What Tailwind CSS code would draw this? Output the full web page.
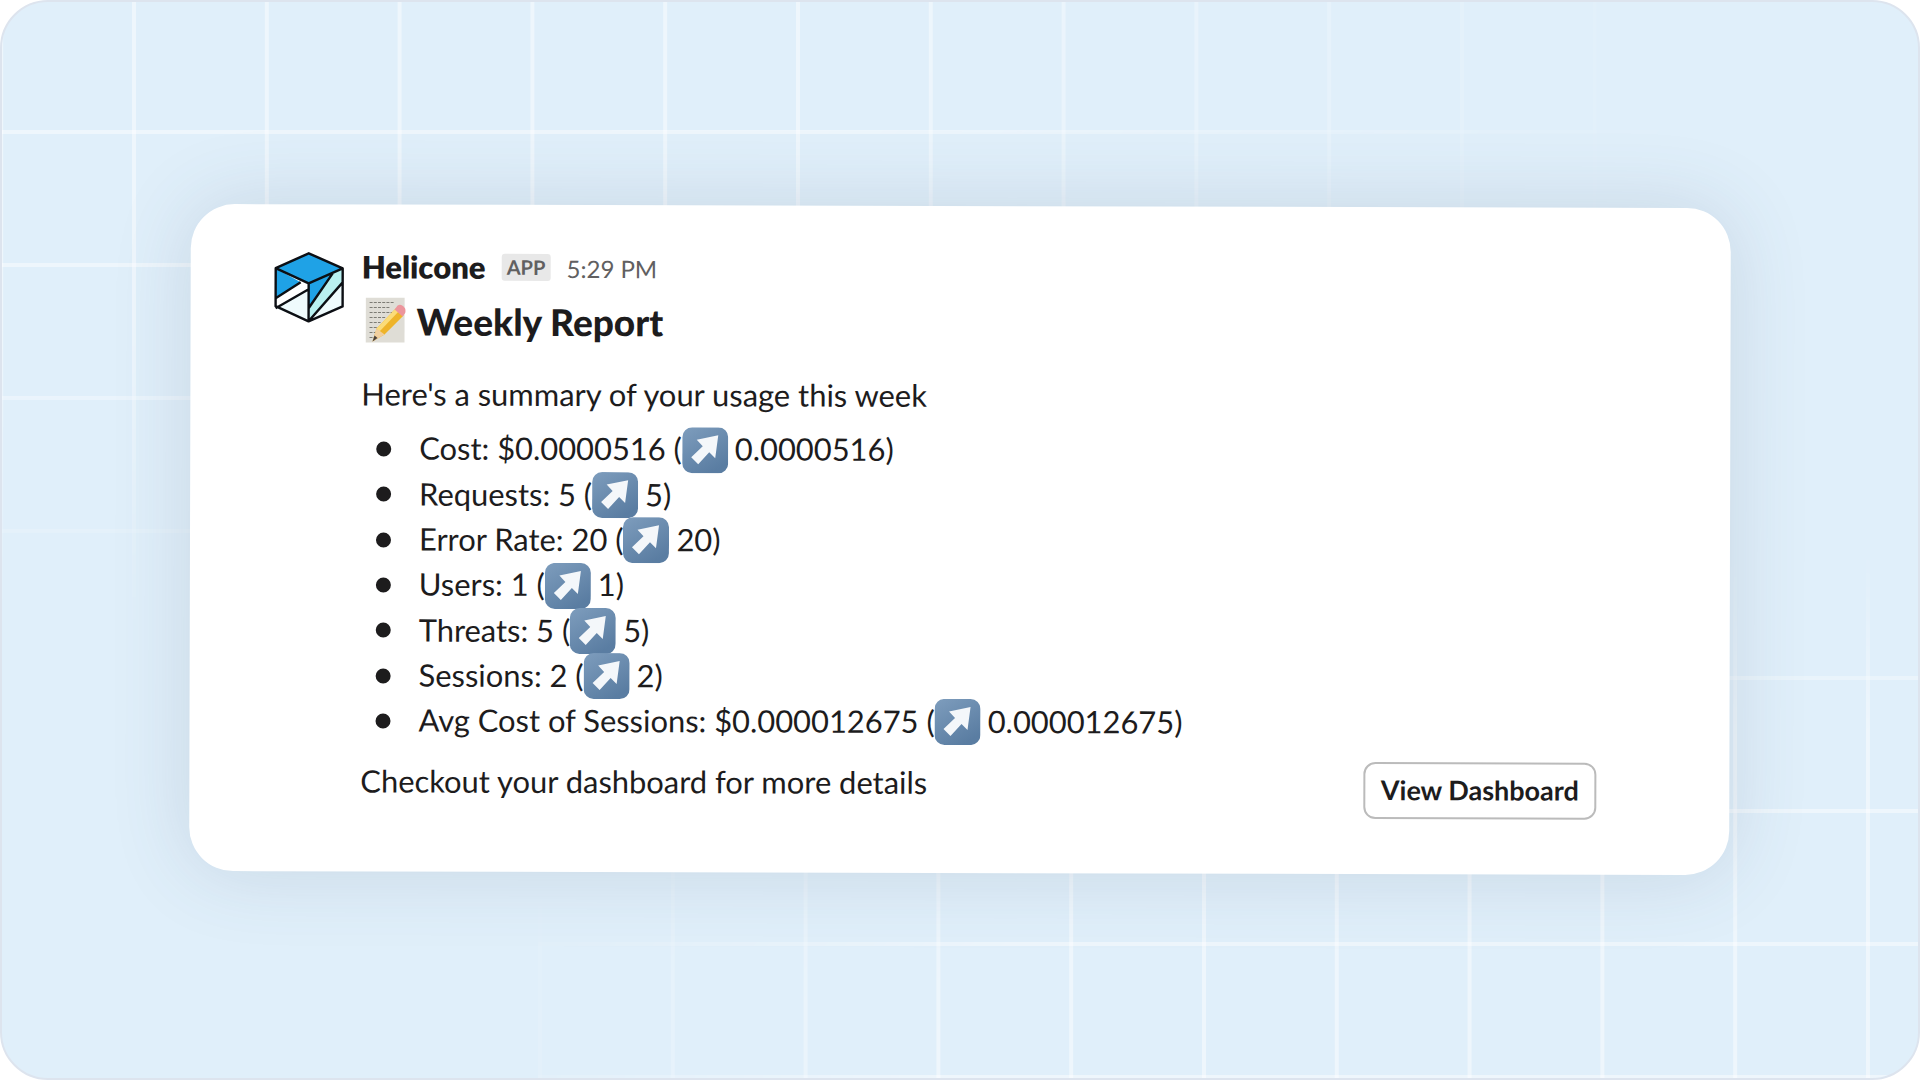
<!DOCTYPE html>
<html lang="en">
<head>
    <meta charset="UTF-8">
    <meta name="viewport" content="width=device-width, initial-scale=1.0">
    <title>Helicone Weekly Report</title>
    <script src="https://cdn.jsdelivr.net/npm/@tailwindcss/browser@4"></script>
</head>
<body class="bg-white font-['Lato','Liberation_Sans',sans-serif] text-[#1d1c1d]">

    <!-- Shared arrow tile -->
    <svg class="absolute w-0 h-0">
        <defs>
            <linearGradient id="tile" x1="0" y1="0" x2="0.6" y2="1">
                <stop offset="0" stop-color="#7e9dbd"/>
                <stop offset="1" stop-color="#5a7da2"/>
            </linearGradient>
        </defs>
        <symbol id="arrow-tile" viewBox="0 0 46 46">
            <rect x="0" y="0" width="46" height="46" rx="10" fill="url(#tile)"/>
            <path d="M36 8 L33 31 L27 25 L16 37 L9 30 L20.500 19 L14.500 12.500 Z" fill="#f4f7fa"/>
        </symbol>
    </svg>

    <div class="relative w-[1920px] h-[1080px] overflow-hidden rounded-[48px] border-2 border-[#dde4ee] bg-[#e0effa]">

        <!-- Background grid, top left -->
        <div class="absolute inset-0 bg-[linear-gradient(to_right,rgba(255,255,255,0.45)_4px,transparent_4px),linear-gradient(to_bottom,rgba(255,255,255,0.45)_4px,transparent_4px)] bg-[size:132.800px_133px] bg-[position:130px_128px] [mask-image:radial-gradient(ellipse_1750px_640px_at_0_0,black_50%,transparent_100%)]"></div>

        <!-- Background grid, bottom right -->
        <div class="absolute left-[536px] top-[480px] right-0 bottom-0 bg-[linear-gradient(to_right,rgba(255,255,255,0.45)_4px,transparent_4px),linear-gradient(to_bottom,rgba(255,255,255,0.45)_4px,transparent_4px)] bg-[size:132.800px_133px] bg-[position:0_61px] [mask-image:radial-gradient(ellipse_1500px_530px_at_100%_100%,black_65%,transparent_100%)]"></div>

        <!-- Card -->
        <div class="relative ml-[188px] mt-[204px] w-[1540px] h-[667px] rounded-[44px] bg-white rotate-[0.15deg] shadow-[0_0_80px_rgba(70,90,110,0.16)] pl-[83px] pt-[44px] flex gap-[17px]">

            <!-- Logo -->
            <svg class="w-[71px] h-[72px] shrink-0 mt-[3px]" viewBox="13 11 71 72">
                <path d="M48 13 L82 28 L48 43 L15 28 Z" fill="#1fa2e6"/>
                <path d="M15 28 L40 42 L15 58 Z" fill="#1fa2e6"/>
                <path d="M15 58 L40 42 L48 47 L15 68 Z" fill="#ffffff"/>
                <path d="M15 68 L48 49 L48 81 Z" fill="#effbfd"/>
                <path d="M48 43 L72 33 L48 68 Z" fill="#1fa2e6"/>
                <path d="M72 33 L82 28 L82 42 L48 81 L48 68 Z" fill="#b9f1f1"/>
                <path d="M82 42 L82 66 L48 81 Z" fill="#effbfd"/>
                <path d="M48 13 L82 28 L82 66 L48 81 L15 66 L15 28 Z M15 28 L48 43 L82 28 M48 43 L48 81 M15 58 L40 42 M15 68 L48 49 M72 33 L48 68 M82 42 L48 81" fill="none" stroke="#0c0f14" stroke-width="2.400" stroke-linejoin="round"/>
            </svg>

            <div class="flex-1 pr-[133px]">
                <!-- Header -->
                <div class="flex items-center h-[36px]">
                    <span class="text-[31px] font-extrabold leading-none">Helicone</span>
                    <span class="ml-[16px] w-[49px] h-[27px] rounded-[3px] bg-[#e8e8e8] text-[#616061] text-[20px] font-bold leading-[27px] text-center">APP</span>
                    <span class="ml-[16px] text-[24px] leading-none text-[#616061] mt-[4px]">5:29 PM</span>
                </div>

                <!-- Title -->
                <div class="flex items-center gap-[11px] mt-[13px] ml-[4px] h-[46px]">
                    <svg class="w-[40px] h-[46px] shrink-0" viewBox="0 0 40 46">
                        <rect x="0" y="0" width="39" height="45" fill="#dfddd6"/>
                        <path d="M4 5h24M4 10h20M4 15h24M4 20h16M4 25h11M4 30h9M4 35h10M4 40h7" stroke="#7d7c75" stroke-width="1" stroke-dasharray="3 1.200"/>
                        <path d="M7 44 L11 31 L30 11 L38 18 L19 37 Z" fill="#eeb42a"/>
                        <path d="M11 31 L30 11 L33 14 L14 34 Z" fill="#fbdc78"/>
                        <path d="M29 12 L32 8 Q35 6 38 9 Q41 12 40 15 L37 19 Z" fill="#ec959c"/>
                        <path d="M11 31 L19 37 L7 44 Z" fill="#f1cf9f"/>
                        <path d="M9 38 L12 40.500 L7 44 Z" fill="#4a4038"/>
                    </svg>
                    <h1 class="text-[37px] font-black leading-none">Weekly Report</h1>
                </div>

                <p class="mt-[28px] text-[30.900px] leading-[45px]">Here's a summary of your usage this week</p>

                <!-- Stats -->
                <ul class="mt-[10px] text-[30.900px]">
                    <li class="flex items-center h-[45.300px]"><span class="w-[15px] h-[15px] rounded-full bg-[#1d1c1d] ml-[15px] mr-[28px]"></span><span>Cost: $0.0000516 (</span><svg class="w-[46px] h-[46px]"><use href="#arrow-tile"/></svg><span class="ml-[7px]">0.0000516)</span></li>
                    <li class="flex items-center h-[45.300px]"><span class="w-[15px] h-[15px] rounded-full bg-[#1d1c1d] ml-[15px] mr-[28px]"></span><span>Requests: 5 (</span><svg class="w-[46px] h-[46px]"><use href="#arrow-tile"/></svg><span class="ml-[7px]">5)</span></li>
                    <li class="flex items-center h-[45.300px]"><span class="w-[15px] h-[15px] rounded-full bg-[#1d1c1d] ml-[15px] mr-[28px]"></span><span>Error Rate: 20 (</span><svg class="w-[46px] h-[46px]"><use href="#arrow-tile"/></svg><span class="ml-[7px]">20)</span></li>
                    <li class="flex items-center h-[45.300px]"><span class="w-[15px] h-[15px] rounded-full bg-[#1d1c1d] ml-[15px] mr-[28px]"></span><span>Users: 1 (</span><svg class="w-[46px] h-[46px]"><use href="#arrow-tile"/></svg><span class="ml-[7px]">1)</span></li>
                    <li class="flex items-center h-[45.300px]"><span class="w-[15px] h-[15px] rounded-full bg-[#1d1c1d] ml-[15px] mr-[28px]"></span><span>Threats: 5 (</span><svg class="w-[46px] h-[46px]"><use href="#arrow-tile"/></svg><span class="ml-[7px]">5)</span></li>
                    <li class="flex items-center h-[45.300px]"><span class="w-[15px] h-[15px] rounded-full bg-[#1d1c1d] ml-[15px] mr-[28px]"></span><span>Sessions: 2 (</span><svg class="w-[46px] h-[46px]"><use href="#arrow-tile"/></svg><span class="ml-[7px]">2)</span></li>
                    <li class="flex items-center h-[45.300px]"><span class="w-[15px] h-[15px] rounded-full bg-[#1d1c1d] ml-[15px] mr-[28px]"></span><span>Avg Cost of Sessions: $0.000012675 (</span><svg class="w-[46px] h-[46px]"><use href="#arrow-tile"/></svg><span class="ml-[7px]">0.000012675)</span></li>
                </ul>

                <!-- Footer -->
                <div class="flex justify-between items-start mt-[15px]">
                    <p class="text-[30.900px] leading-[45px]">Checkout your dashboard for more details</p>
                    <button class="w-[233px] h-[57px] rounded-[12px] border-2 border-[#bbbbbb] bg-white text-[27px] font-bold text-[#1d1c1d] mt-[1px]">View Dashboard</button>
                </div>
            </div>
        </div>
    </div>

</body>
</html>
